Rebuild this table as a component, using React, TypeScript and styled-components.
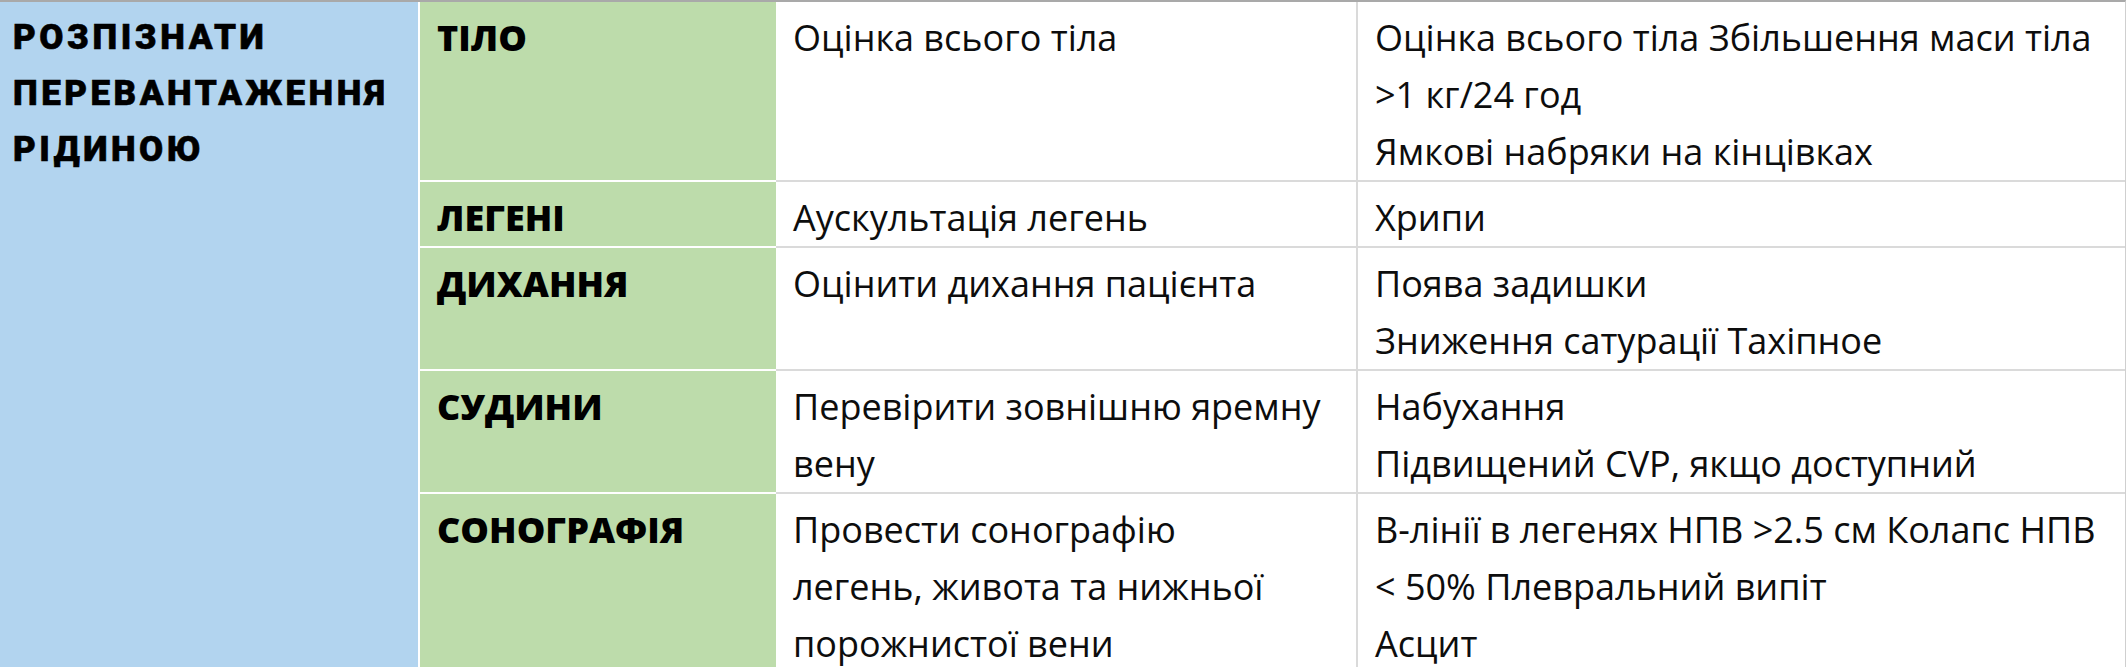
import React from 'react'
import styled, { createGlobalStyle } from 'styled-components'

const GlobalStyle = createGlobalStyle`
    html, body {
        margin: 0;
        padding: 0;
        background: #ffffff;
    }
    body {
        font-family: "Open Sans", "Liberation Sans", sans-serif;
        color: #111;
    }
`

const rows = [
    {
        label: 'ТІЛО',
        action: ['Оцінка всього тіла'],
        signs: ['Оцінка всього тіла Збільшення маси тіла', '>1 кг/24 год', 'Ямкові набряки на кінцівках'],
    },
    {
        label: 'ЛЕГЕНІ',
        action: ['Аускультація легень'],
        signs: ['Хрипи'],
    },
    {
        label: 'ДИХАННЯ',
        action: ['Оцінити дихання пацієнта'],
        signs: ['Поява задишки', 'Зниження сатурації Тахіпное'],
    },
    {
        label: 'СУДИНИ',
        action: ['Перевірити зовнішню яремну', 'вену'],
        signs: ['Набухання', 'Підвищений CVP, якщо доступний'],
    },
    {
        label: 'СОНОГРАФІЯ',
        action: ['Провести сонографію', 'легень, живота та нижньої', 'порожнистої вени'],
        signs: ['В-лінії в легенях НПВ >2.5 см Колапс НПВ', '< 50% Плевральний випіт', 'Асцит'],
    },
]

export default function App() {
    return <>
        <GlobalStyle />
        <Table>
            <Heading>
                <HeadLine>РОЗПІЗНАТИ</HeadLine>
                <HeadLine>ПЕРЕВАНТАЖЕННЯ</HeadLine>
                <HeadLine>РІДИНОЮ</HeadLine>
            </Heading>
            {rows.map((r, i) => {
                const last = i === rows.length - 1
                return <React.Fragment key={r.label}>
                    <Label last={last}>{r.label}</Label>
                    <Cell last={last}>
                        {r.action.map(t => <Line key={t}>{t}</Line>)}
                    </Cell>
                    <Cell last={last} divided>
                        {r.signs.map(t => <Line key={t}>{t}</Line>)}
                    </Cell>
                </React.Fragment>
            })}
        </Table>
    </>
}

const Table = styled.div`
    display: grid;
    grid-template-columns: 420px 356px 580px 1fr;
    width: 2126px;
    box-sizing: border-box;
    border-top: 2px solid #a9a9a9;
    border-right: 1px solid #cfcfcf;
`
const Heading = styled.div`
    grid-row: 1 / span 5;
    background: #b2d4ef;
    border-right: 2px solid #ffffff;
    border-bottom: 2px solid #9fb3c4;
    padding: 8px 0 0 13px;
    font-family: Roboto, "Liberation Sans", sans-serif;
    font-weight: 900;
    font-size: 35px;
    letter-spacing: 3.5px;
    line-height: 56px;
    color: #000;
    -webkit-text-stroke: 0.6px #000;
`
const HeadLine = styled.div`
    white-space: nowrap;
`
const Label = styled.div<{ last?: boolean }>`
    background: #bddcab;
    border-bottom: 2px solid ${p => p.last ? '#b9c7b0' : '#ffffff'};
    padding: 7px 0 0 17px;
    font-weight: 800;
    font-size: 36px;
    line-height: 57px;
    color: #000;
`
const Cell = styled.div<{ last?: boolean, divided?: boolean }>`
    background: #ffffff;
    border-bottom: 2px solid ${p => p.last ? '#c4c4c4' : '#dadada'};
    border-left: ${p => p.divided ? '2px solid #dadada' : 'none'};
    padding: 7px 0 0 17px;
    font-size: 36px;
    line-height: 57px;
    color: #0d0d0d;
`
const Line = styled.div`
    white-space: nowrap;
`
